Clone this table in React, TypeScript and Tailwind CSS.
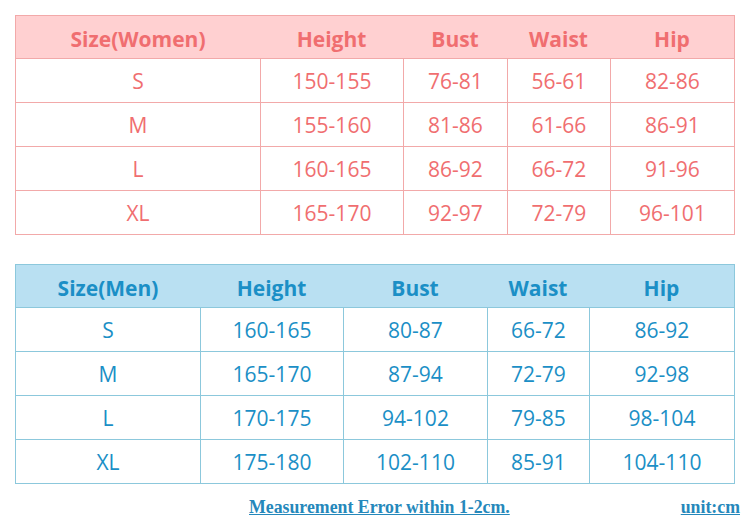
const women = {
  title: 'Size(Women)',
  cols: ['w-[244px]', 'w-[143px]', 'w-[104px]', 'w-[103px]', 'flex-1'],
  rows: [
    ['S', '150-155', '76-81', '56-61', '82-86'],
    ['M', '155-160', '81-86', '61-66', '86-91'],
    ['L', '160-165', '86-92', '66-72', '91-96'],
    ['XL', '165-170', '92-97', '72-79', '96-101'],
  ],
};

const men = {
  title: 'Size(Men)',
  cols: ['w-[184px]', 'w-[143px]', 'w-[144px]', 'w-[102px]', 'flex-1'],
  rows: [
    ['S', '160-165', '80-87', '66-72', '86-92'],
    ['M', '165-170', '87-94', '72-79', '92-98'],
    ['L', '170-175', '94-102', '79-85', '98-104'],
    ['XL', '175-180', '102-110', '85-91', '104-110'],
  ],
};

type Theme = { border: string; head: string; text: string };

const pink: Theme = {
  border: 'border-[#f2a9a9]',
  head: 'bg-[#ffd0d1]',
  text: 'text-[#f06e70]',
};

const blue: Theme = {
  border: 'border-[#8cc8dc]',
  head: 'bg-[#b9e0f2]',
  text: 'text-[#1b8fc6]',
};

function SizeTable({ data, theme }: { data: typeof women; theme: Theme }) {
  const heads = [data.title, 'Height', 'Bust', 'Waist', 'Hip'];
  return (
    <div className={`border ${theme.border} ${theme.text}`}>
      <div className={`flex h-[42px] items-center pt-[5px] ${theme.head} font-bold text-[21px]`}>
        {heads.map((h, i) => (
          <div key={h} className={`${data.cols[i]} text-center`}>{h}</div>
        ))}
      </div>
      {data.rows.map((row, r) => (
        <div key={r} className={`flex h-[44px] border-t ${theme.border} text-[21px]`}>
          {row.map((cell, i) => (
            <div
              key={i}
              className={`${data.cols[i]} flex items-center justify-center pt-[3px] ${i > 0 ? `border-l ${theme.border}` : ''}`}
            >
              {cell}
            </div>
          ))}
        </div>
      ))}
    </div>
  );
}

export default function App() {
  return (
    <div className="w-[750px] h-[527px] bg-white pt-[15px] px-[15px] font-['Open_Sans','Noto_Sans',sans-serif]">
      <div className="w-[720px]">
        <SizeTable data={women} theme={pink} />
        <div className="h-[29px]" />
        <SizeTable data={men} theme={blue} />
      </div>
      <div className="flex justify-between pl-[234px] mt-[10px] w-[725px] font-['Liberation_Serif',serif] font-bold text-[17.8px] text-[#2588bb] underline">
        <span>Measurement Error within 1-2cm.</span>
        <span>unit:cm</span>
      </div>
    </div>
  );
}
